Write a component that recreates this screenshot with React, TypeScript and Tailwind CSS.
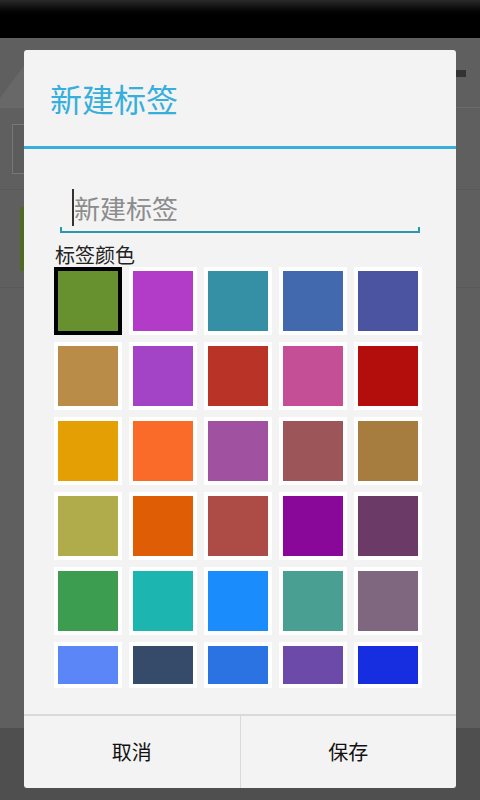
const swatches = [
  "#67902f", "#b23cc8", "#3590a6", "#4269ae", "#4a54a1",
  "#b98d47", "#a344c6", "#b93427", "#c44f96", "#b30e0b",
  "#e49f04", "#fa6a28", "#a052a0", "#9c5659", "#a67d3e",
  "#b1ac4b", "#df5e05", "#ad4b47", "#8a0899", "#6b3a67",
  "#3c9c4f", "#1cb5b0", "#1a8cfc", "#49a092", "#7e677f",
  "#5a86f7", "#354b69", "#2b72e3", "#6b4aaa", "#162ee0",
];

function Backdrop() {
  return (
    <div className="flex h-[800px] w-[480px] flex-col bg-[#5f5f5f]">
      <div className="h-[38px] bg-gradient-to-b from-[#2a2a2a] via-black to-black" />
      {/* action bar */}
      <div className="relative flex h-[70px] justify-between border-b border-[#6a6a6a]">
        <svg width="30" height="70" viewBox="0 0 30 70" className="block">
          <polygon points="0,69 0,60 26,25 30,25 30,69" fill="#686868" />
        </svg>
        <div className="mr-[14px] mt-[32px] h-[7px] w-[12px] bg-[#333]" />
      </div>
      {/* search row */}
      <div className="flex h-[82px] items-center border-b border-[#585858] pl-[12px]">
        <div className="h-[50px] w-[40px] border border-[#777] bg-[#5c5c5c]" />
      </div>
      {/* list item */}
      <div className="flex h-[98px] items-center border-b border-[#585858] pl-[20px]">
        <div className="h-[64px] w-[10px] bg-[#4f6a22]" />
      </div>
      <div className="flex-1" />
      <div className="h-[72px] bg-[#4f4f4f]" />
    </div>
  );
}

function Swatch({ color, selected, short }: { color: string; selected: boolean; short: boolean }) {
  return (
    <div
      className={clsxCell(selected, short)}
    >
      <div className="h-full w-full" style={{ backgroundColor: color }} />
    </div>
  );
}

function clsxCell(selected: boolean, short: boolean) {
  const size = short ? "h-[46px] w-[68px]" : "h-[68px] w-[68px]";
  return selected ? `${size} border-[4px] border-black` : `${size} border-[4px] border-white`;
}

export default function App() {
  return (
    <div className="relative h-[800px] w-[480px] overflow-hidden font-['Noto_Sans_CJK_SC','Noto_Sans',sans-serif]">
      <Backdrop />

      <div className="absolute left-[24px] top-[50px] flex h-[738px] w-[432px] flex-col overflow-hidden rounded-[3px] bg-[#f3f3f3]">
        <div className="flex h-[96px] items-center pl-[26px]">
          <span className="text-[32px] leading-[40px] text-[#36afdc]">新建标签</span>
        </div>
        <div className="h-[3px] bg-[#36afdc]" />

        <div className="flex flex-1 flex-col">
          <div className="ml-[36px] mt-[35px] w-[360px]">
            <div className="flex h-[44px] items-center pl-[12px]">
              <div className="mt-[2px] h-[37px] w-[2px] bg-[#333]" />
              <span className="pt-[4px] text-[26px] leading-[30px] text-[#8c8c8c]">新建标签</span>
            </div>
            <div className="flex h-[5px] items-end justify-between border-b-2 border-[#2c97ad]">
              <div className="h-[4px] w-[2px] bg-[#2c97ad]" />
              <div className="h-[4px] w-[2px] bg-[#2c97ad]" />
            </div>
          </div>

          <div className="ml-[31px] mt-[11px] text-[20px] leading-[22px] text-[#222]">标签颜色</div>

          <div className="ml-[30px] mt-[1px] h-[421px] w-[368px] overflow-hidden">
            <div className="grid grid-cols-5 gap-[7px]">
              {swatches.map((c, i) => (
                <Swatch key={i} color={c} selected={i === 0} short={i >= 25} />
              ))}
            </div>
          </div>
        </div>

        <div className="h-[2px] bg-[#d9d9d9]" />
        <div className="flex h-[72px]">
          <button className="flex flex-1 items-center justify-center text-[20px] text-[#111]">取消</button>
          <div className="w-px bg-[#d9d9d9]" />
          <button className="flex flex-1 items-center justify-center text-[20px] text-[#111]">保存</button>
        </div>
      </div>
    </div>
  );
}
